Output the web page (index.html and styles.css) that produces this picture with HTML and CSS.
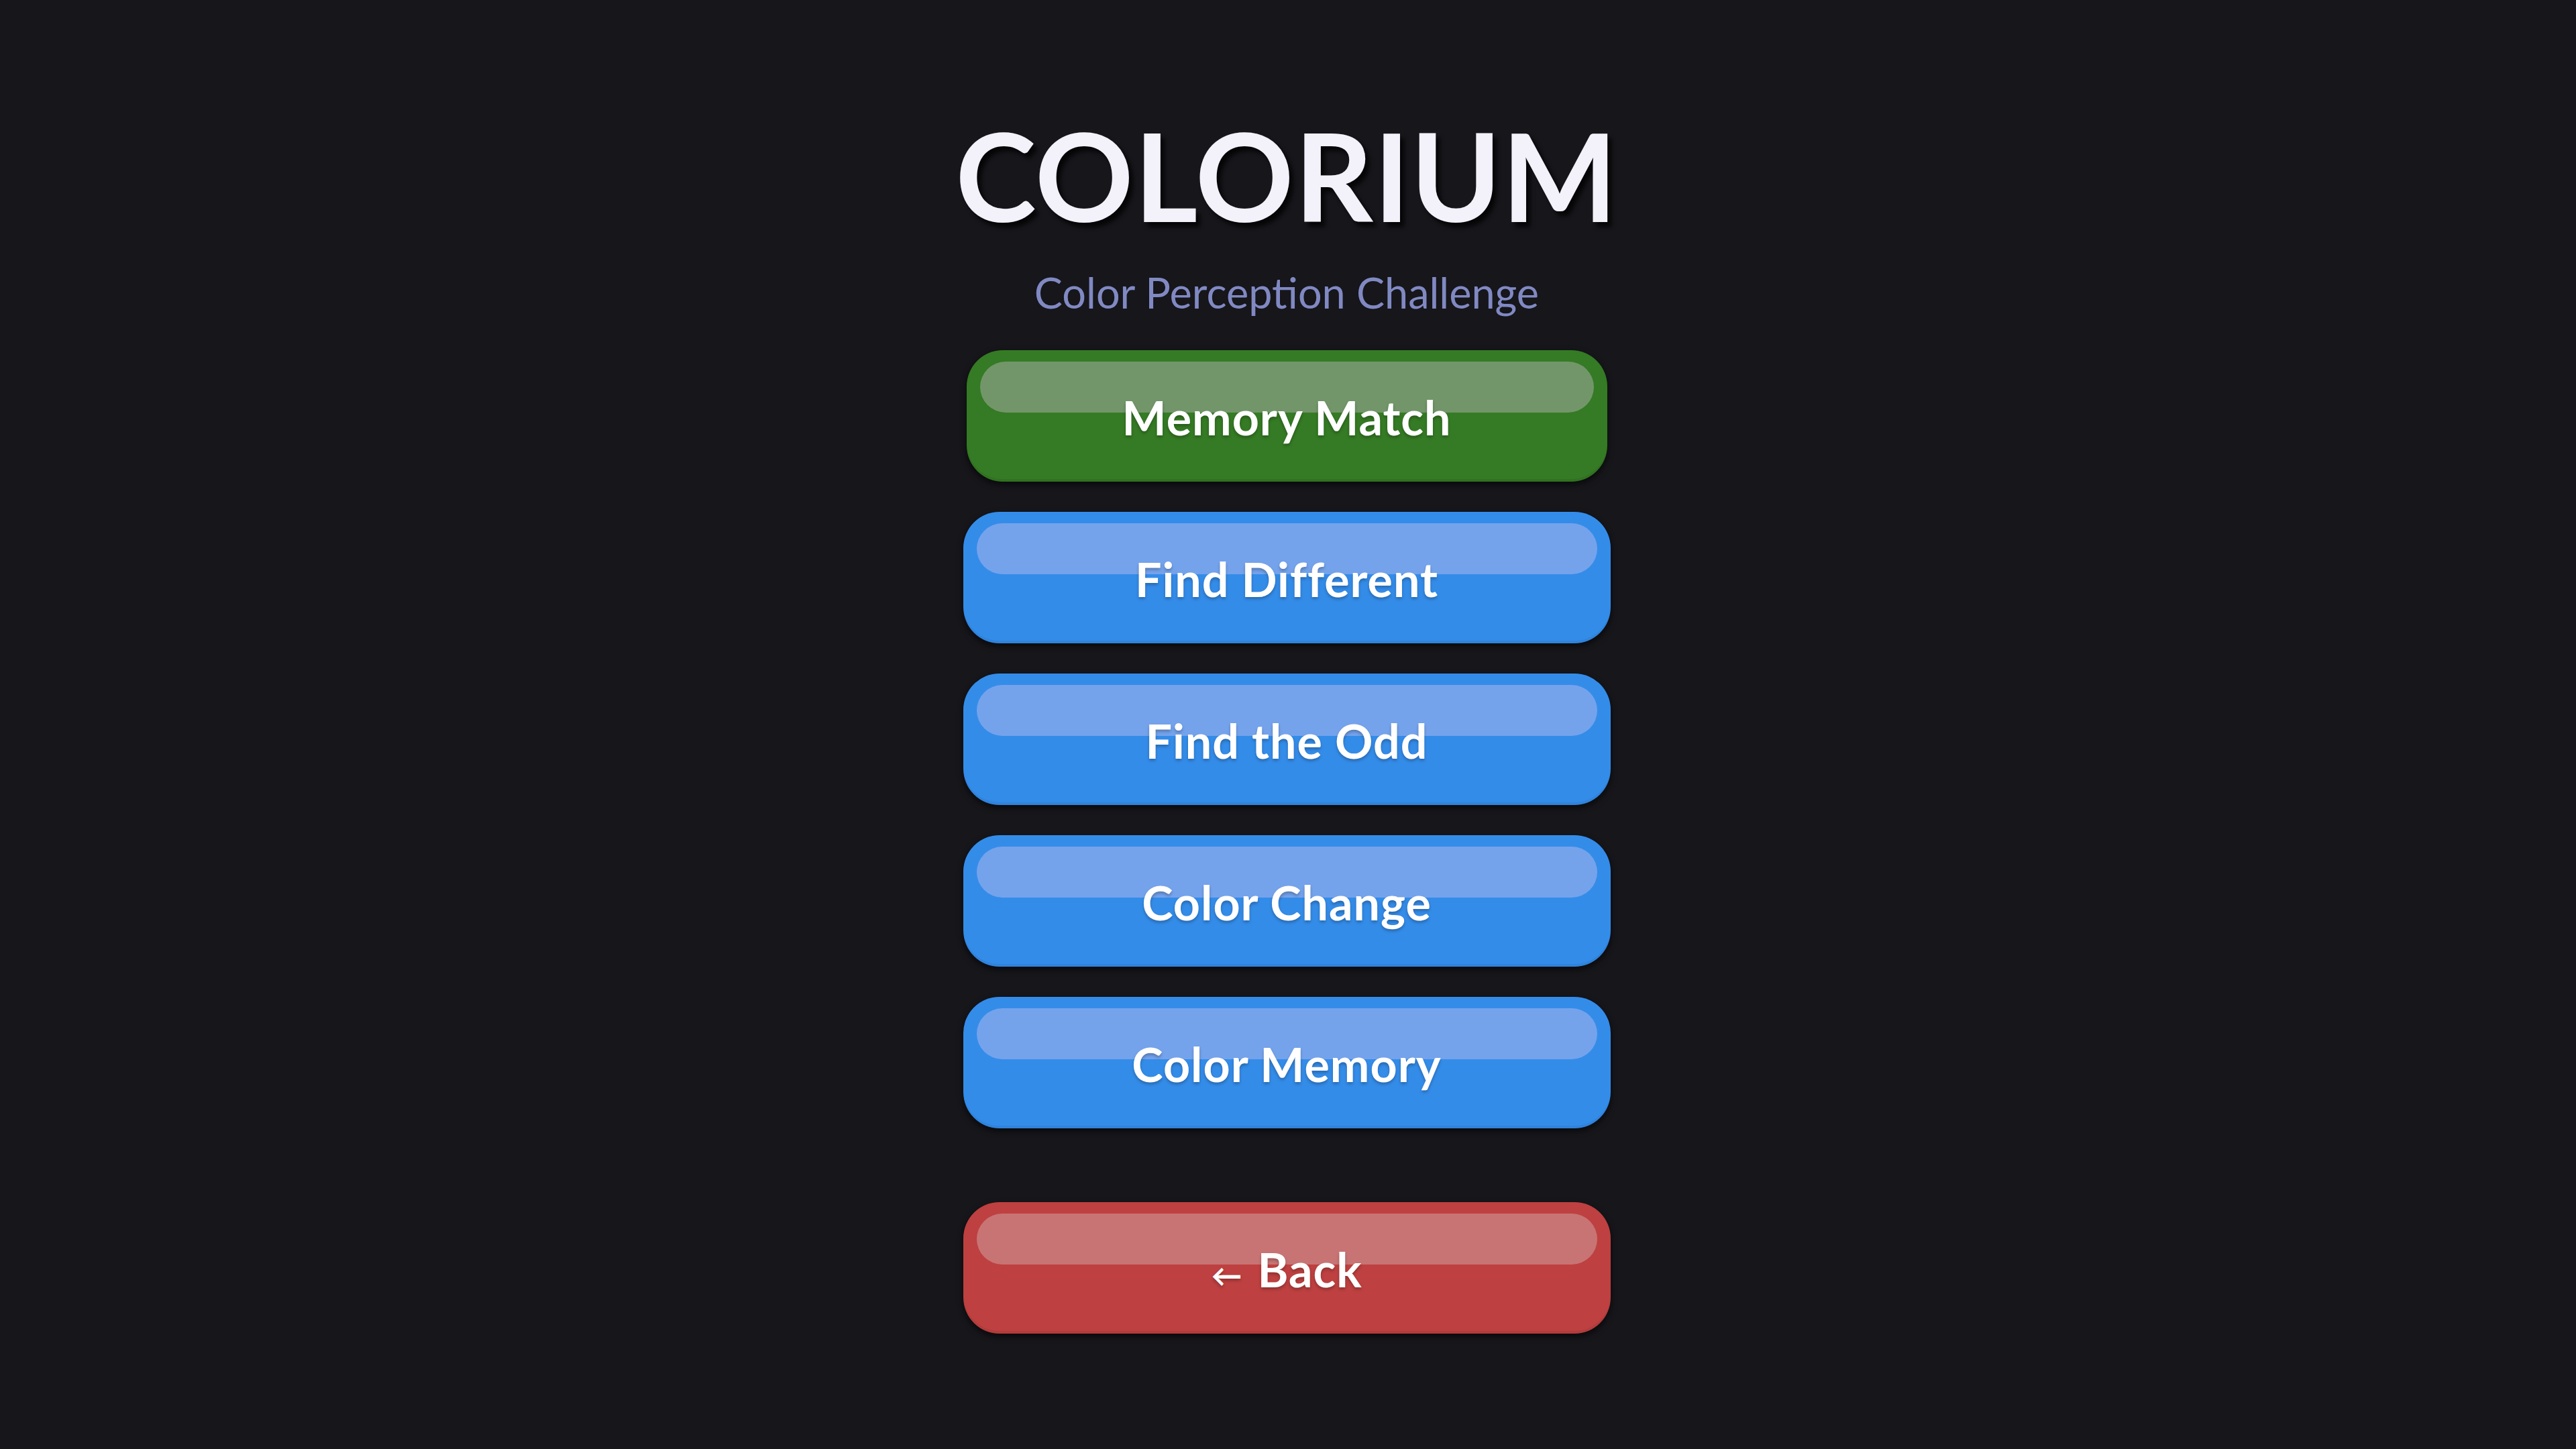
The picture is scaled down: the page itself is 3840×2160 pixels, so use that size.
FILE: index.html
```html
<!DOCTYPE html>
<html lang="en">
<head>
<meta charset="utf-8">
<title>Colorium</title>
<link rel="stylesheet" href="styles.css">
</head>
<body>
<main class="menu">
  <h1 class="title">COLORIUM</h1>
  <p class="subtitle">Color Perception Challenge</p>
  <div class="modes">
    <button class="btn btn-green btn-active">Memory Match</button>
    <button class="btn btn-blue">Find Different</button>
    <button class="btn btn-blue">Find the Odd</button>
    <button class="btn btn-blue">Color Change</button>
    <button class="btn btn-blue">Color Memory</button>
  </div>
  <button class="btn btn-red btn-back"><span class="arrow">←</span> Back</button>
</main>
</body>
</html>
```

FILE: styles.css
```css
html, body {
  margin: 0;
  padding: 0;
  background: #16161b;
  height: 100%;
}
body {
  font-family: "Lato", "Noto Sans", sans-serif;
  color: #f4f2fb;
}
.menu {
  display: flex;
  flex-direction: column;
  align-items: center;
  padding-top: 170px;
  padding-right: 4px;
}
.title {
  margin: 0;
  font-size: 182px;
  line-height: 1;
  font-weight: 700;
  color: #f3f1fa;
  letter-spacing: 1px;
  text-shadow: 6px 7px 6px rgba(0, 0, 0, 0.75);
}
.subtitle {
  margin: 52px 0 0;
  font-size: 63px;
  line-height: 1;
  font-weight: 400;
  color: #8089c2;
}
.modes {
  margin-top: 55px;
  display: flex;
  flex-direction: column;
  align-items: center;
  gap: 45px;
}
.btn {
  position: relative;
  isolation: isolate;
  width: 965px;
  height: 196px;
  border: none;
  border-radius: 54px;
  font-family: "Lato", "Noto Sans", sans-serif;
  font-weight: 700;
  font-size: 70px;
  color: #ffffff;
  letter-spacing: 1px;
  text-shadow: 0 3px 4px rgba(0, 0, 0, 0.25);
  box-shadow: 0 4px 10px rgba(0, 0, 0, 0.6), inset 0 -4px 0 rgba(0, 0, 0, 0.06);
  padding: 4px 0 0;
  display: flex;
  align-items: center;
  justify-content: center;
  overflow: hidden;
}
.btn::before {
  content: "";
  position: absolute;
  z-index: -1;
  left: 20px;
  right: 20px;
  top: 17px;
  height: 76px;
  border-radius: 38px;
}
.btn-green {
  background: #357a24;
}
.btn-green::before {
  background: #72966a;
}
.btn-active {
  width: 955px;
}
.btn-blue {
  background: #348ce9;
}
.btn-blue::before {
  background: #74a3ec;
}
.btn-red {
  background: #be4040;
}
.btn-red::before {
  background: #c87474;
}
.btn-back {
  margin-top: 110px;
}
.arrow {
  font-size: 46px;
  margin-right: 22px;
  position: relative;
  top: 8px;
}
```
